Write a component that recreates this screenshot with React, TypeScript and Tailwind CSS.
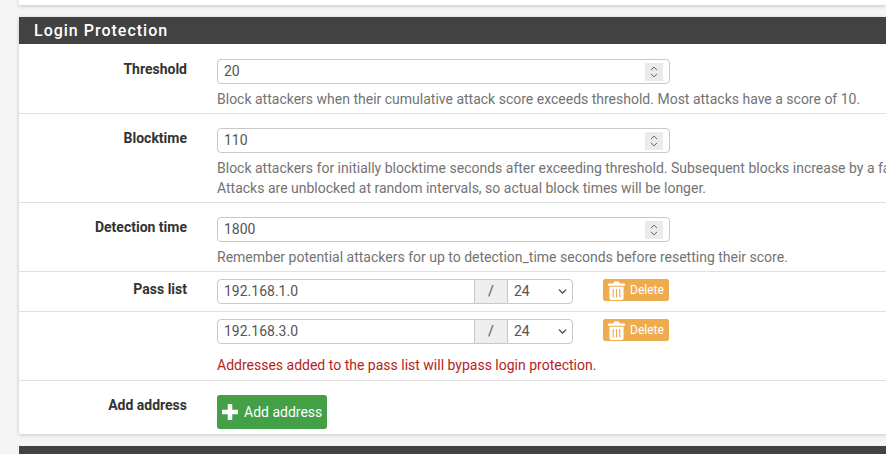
import { ChevronDown, ChevronUp } from 'lucide-react';

const inputClass = 'h-[25px] border border-[#c8c8c8] bg-white text-[14px] leading-[23px] text-[#555]';

function Row({ label, children, className = '' }: { label?: string; children: React.ReactNode; className?: string }) {
  return (
    <div className={`flex ${className}`}>
      <div className="w-[168px] shrink-0 text-right text-[14px] font-bold leading-[20px] text-[#333]">{label}</div>
      <div className="ml-[30px] min-w-0 flex-1 whitespace-nowrap">{children}</div>
    </div>
  );
}

function NumberInput({ value }: { value: string }) {
  return (
    <div className={`${inputClass} flex w-[453px] items-center justify-between rounded-[4px] pl-[6px] pr-[6px]`}>
      <span>{value}</span>
      <div className="flex h-[18px] w-[18px] flex-col items-center justify-center bg-[#ebebeb] text-[#555]">
        <ChevronUp size={12} strokeWidth={2} className="-mb-[2px]" />
        <ChevronDown size={12} strokeWidth={2} className="-mt-[2px]" />
      </div>
    </div>
  );
}

function Help({ children }: { children: React.ReactNode }) {
  return <p className="mt-[5px] text-[14px] leading-[20px] text-[#737373]">{children}</p>;
}

// filled bin, same shape as the fa-trash glyph
function TrashIcon() {
  return (
    <svg width="17" height="19" viewBox="0 0 18 20" className="mr-[5px] shrink-0" fill="white">
      <path d="M6.5 0.5h5l1 2H17a1 1 0 0 1 1 1V5H0V3.5a1 1 0 0 1 1-1h4.5z" />
      <path
        fillRule="evenodd"
        d="M1.5 6h15v12a2 2 0 0 1-2 2h-11a2 2 0 0 1-2-2zM5 8.5v9h1.2v-9zM8.4 8.5v9h1.2v-9zM11.8 8.5v9H13v-9z"
      />
    </svg>
  );
}

function PlusIcon() {
  return (
    <svg width="16" height="16" viewBox="0 0 16 16" className="mr-[6px] shrink-0" fill="white">
      <path d="M5.75 0h4.5v5.75H16v4.5h-5.75V16h-4.5v-5.75H0v-4.5h5.75z" />
    </svg>
  );
}

function PassRow({ ip }: { ip: string }) {
  return (
    <div className="flex items-start">
      <div className="flex w-[356px]">
        <div className={`${inputClass} w-[258px] rounded-l-[4px] pl-[6px]`}>{ip}</div>
        <div className="flex h-[25px] w-[32px] items-center justify-center border-y border-[#c8c8c8] bg-[#eeeeee] text-[14px] text-[#555]">/</div>
        <div className={`${inputClass} flex w-[66px] items-center justify-between rounded-r-[4px] pl-[6px] pr-[3px]`}>
          <span>24</span>
          <ChevronDown size={13} strokeWidth={2.5} className="text-[#444]" />
        </div>
      </div>
      <button className="ml-[30px] flex h-[22px] w-[66px] items-center rounded-[2px] bg-[#efac4e] pl-[5px] text-[12px] text-white">
        <TrashIcon />
        Delete
      </button>
    </div>
  );
}

export default function App() {
  return (
    <div className="h-[454px] w-[886px] overflow-hidden bg-[#f5f5f5] pl-[19px] [font-family:Roboto,sans-serif]">
      <div className="h-[5px] bg-white shadow-[0_1px_4px_rgba(0,0,0,0.2)]" />
      <section className="mt-[12px] bg-white shadow-[0_1px_4px_rgba(0,0,0,0.2)]">
        <h2 className="h-[27px] bg-[#424242] pl-[15px] text-[16px] font-medium leading-[28px] tracking-[1px] text-white">Login Protection</h2>
        <Row label="Threshold" className="h-[69px] pt-[15px]">
          <NumberInput value="20" />
          <Help>Block attackers when their cumulative attack score exceeds threshold. Most attacks have a score of 10.</Help>
        </Row>
        <Row label="Blocktime" className="h-[89px] border-t border-[#e0e0e0] pt-[14px]">
          <NumberInput value="110" />
          <Help>
            Block attackers for initially blocktime seconds after exceeding threshold. Subsequent blocks increase by a factor of 1.5.
            <br />
            Attacks are unblocked at random intervals, so actual block times will be longer.
          </Help>
        </Row>
        <Row label="Detection time" className="h-[69px] border-t border-[#e0e0e0] pt-[14px]">
          <NumberInput value="1800" />
          <Help>Remember potential attackers for up to detection_time seconds before resetting their score.</Help>
        </Row>
        <Row label="Pass list" className="h-[40px] border-t border-[#e0e0e0] pt-[7px]">
          <PassRow ip="192.168.1.0" />
        </Row>
        <Row className="h-[69px] border-t border-[#e0e0e0] pt-[7px]">
          <PassRow ip="192.168.3.0" />
          <p className="mt-[11px] text-[14px] leading-[20px] text-[#b71c1c]">Addresses added to the pass list will bypass login protection.</p>
        </Row>
        <Row label="Add address" className="h-[54px] border-t border-[#e0e0e0] pt-[14px]">
          <button className="flex h-[34px] w-[110px] items-center rounded-[3px] bg-[#43a047] pl-[5px] text-[14px] text-white">
            <PlusIcon />
            Add address
          </button>
        </Row>
      </section>
      <div className="mt-[12px] h-[8px] bg-[#424242]" />
    </div>
  );
}
